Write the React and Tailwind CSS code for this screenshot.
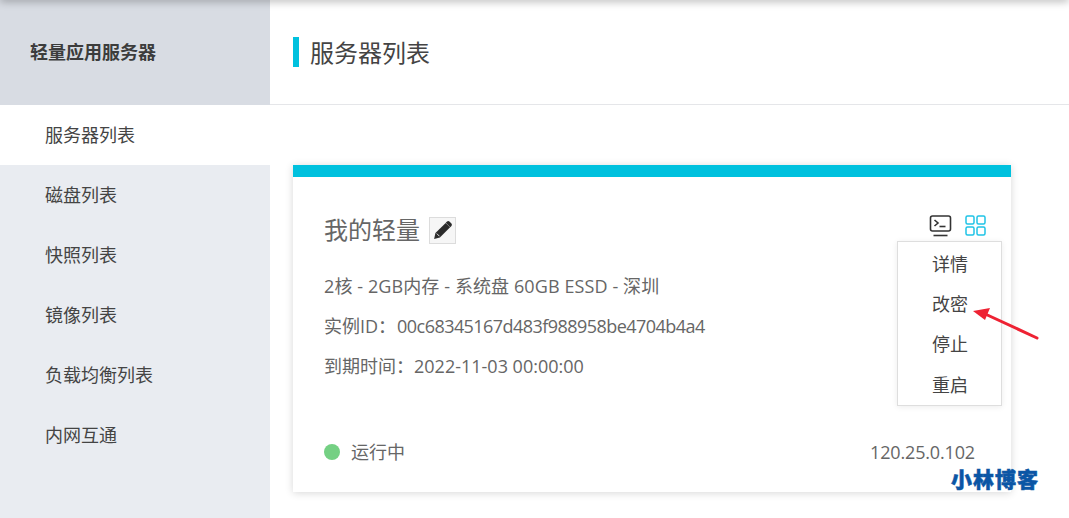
import React from "react";

const FONT = "font-['Open_Sans','Noto_Sans_CJK_SC',sans-serif]";

function Item({ children, active }) {
  return (
    <div className={`h-[60px] flex items-center pl-[45px] pt-[1px] text-[18px] text-[#444] ${active ? "bg-white" : ""}`}>
      {children}
    </div>
  );
}

export default function App() {
  return (
    <div className={`relative w-[1069px] h-[518px] overflow-hidden bg-white flex ${FONT}`}>
      <div className="absolute left-0 right-0 top-[-6px] h-[6px] shadow-[0_1px_8px_rgba(0,0,0,0.35)]" />
      <aside className="w-[270px] shrink-0 bg-[#e9ecf1] flex flex-col">
        <div className="h-[105px] bg-[#d8dce3] flex items-center pl-[30px] text-[18px] font-bold text-[#3c3c3c]">
          轻量应用服务器
        </div>
        <Item active>服务器列表</Item>
        <Item>磁盘列表</Item>
        <Item>快照列表</Item>
        <Item>镜像列表</Item>
        <Item>负载均衡列表</Item>
        <Item>内网互通</Item>
      </aside>
      <main className="flex-1 flex flex-col">
        <div className="h-[105px] border-b border-[#e5e6e9] flex items-center pl-[23px]">
          <div className="w-[6px] h-[30px] bg-[#00c1de]" />
          <div className="ml-[11px] pt-[1px] text-[24px] leading-[30px] text-[#444]">服务器列表</div>
        </div>
        <div className="pl-[23px] pt-[60px]">
          <section className="relative w-[718px] h-[327px] bg-white border-t-[12px] border-[#00c1de] shadow-[0_1px_8px_rgba(0,0,0,0.16)] flex flex-col pl-[31px] pr-[36px] text-[#666]">
            <div className="flex items-center mt-[38px] h-[30px]">
              <span className="text-[24px] leading-[30px] text-[#666]">我的轻量</span>
              <span className="ml-[9px] w-[27px] h-[27px] bg-[#f6f6f6] border border-[#dcdcdc] flex items-center justify-center">
                <svg width="20" height="20" viewBox="0 0 18 18" fill="#2b2b2b">
                  <path d="M1 17l1.2-5.2L11.4 2.6l4 4L6.2 15.8z" />
                  <path d="M12.4 1.6c.8-.8 1.8-.8 2.6 0l1.4 1.4c.8.8.8 1.8 0 2.6l-.9.9-4-4z" />
                  <path d="M3.4 12.2l2.4 2.4" stroke="#f6f6f6" strokeWidth="0.8" />
                </svg>
              </span>
            </div>
            <div className="mt-[21px] h-[40px] flex items-center text-[18px] tracking-[0.1px]">2核 - 2GB内存 - 系统盘 60GB ESSD - 深圳</div>
            <div className="h-[41px] flex items-center text-[18px]">实例ID：<span className="ml-[1px] tracking-[-0.55px]">00c68345167d483f988958be4704b4a4</span></div>
            <div className="h-[39px] flex items-center text-[18px]">到期时间：2022-11-03 00:00:00</div>
            <div className="mt-auto mb-[25px] h-[30px] flex items-center justify-between text-[18px]">
              <div className="flex items-center">
                <span className="w-4 h-4 rounded-full bg-[#74d083]" />
                <span className="ml-[11px]">运行中</span>
              </div>
              <span className="tracking-[-0.15px]">120.25.0.102</span>
            </div>

            <div className="absolute left-[636px] top-[38px] flex items-start">
              <svg width="23" height="23" viewBox="0 0 22 23" fill="none" stroke="#333" strokeWidth="1.6">
                <rect x="1" y="1" width="20" height="15" rx="2" />
                <path d="M5 5l3.5 3L5 11" />
                <path d="M10 11.5h6" />
                <path d="M4 20.5h14" />
              </svg>
              <svg className="ml-[13px]" width="21" height="21" viewBox="0 0 21 21" fill="none" stroke="#1fc3e6" strokeWidth="1.5">
                <rect x="1" y="1" width="8" height="8" rx="1.5" />
                <rect x="12" y="1" width="8" height="8" rx="1.5" />
                <rect x="1" y="12" width="8" height="8" rx="1.5" />
                <rect x="12" y="12" width="8" height="8" rx="1.5" />
              </svg>
            </div>

            <div className="absolute left-[604px] top-[64px] w-[105px] h-[165px] bg-white border border-[#dedede] shadow-[0_1px_6px_rgba(0,0,0,0.08)] pt-[2px] flex flex-col text-[18px] text-[#444]">
              <div className="h-[40px] flex items-center pl-[34px]">详情</div>
              <div className="h-[40px] flex items-center pl-[34px]">改密</div>
              <div className="h-[41px] flex items-center pl-[34px]">停止</div>
              <div className="h-[40px] flex items-center pl-[34px]">重启</div>
            </div>
          </section>
        </div>
      </main>

      <svg className="absolute left-[970px] top-[303px]" width="72" height="38" viewBox="0 0 72 38" fill="none">
        <path d="M67 35L13 10" stroke="#ee2233" strokeWidth="3" strokeLinecap="round" />
        <path d="M3 8l17-3-5 12z" fill="#ee2233" />
      </svg>
      <div className="absolute left-[951px] top-[467px] text-[21px] leading-[24px] font-black tracking-[1px] text-[#0b56a5] [-webkit-text-stroke:0.5px_#0b56a5]">
        小林博客
      </div>
    </div>
  );
}
